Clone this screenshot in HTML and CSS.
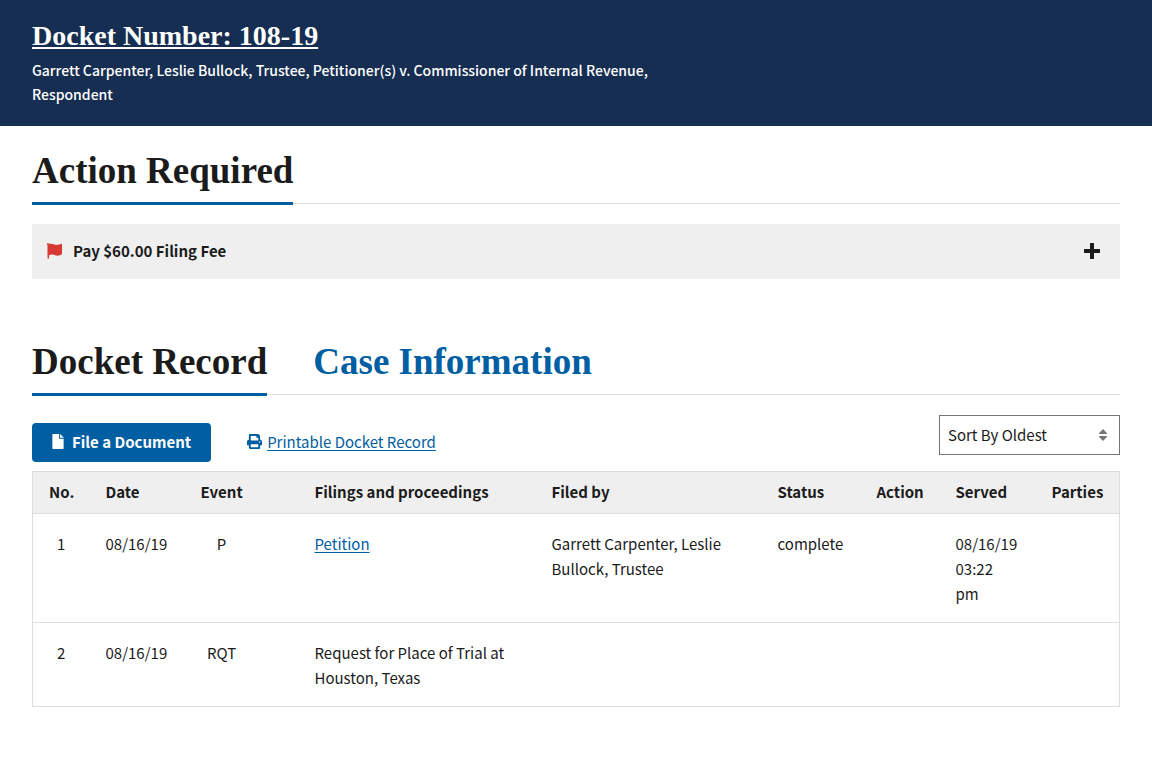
FILE: index.html
```html
<!DOCTYPE html>
<html lang="en">
<head>
<meta charset="utf-8">
<meta name="viewport" content="width=device-width, initial-scale=1">
<title>Docket Number: 108-19</title>
<link rel="stylesheet" href="styles.css">
</head>
<body>
<header class="case-header">
  <h1 class="case-title"><a href="#case">Docket Number: 108-19</a></h1>
  <p class="case-caption">Garrett Carpenter, Leslie Bullock, Trustee, Petitioner(s) v. Commissioner of Internal Revenue, Respondent</p>
</header>
<main class="content">
  <section>
    <div class="tabs">
      <h2 class="tab tab-active">Action Required</h2>
    </div>
    <button type="button" class="accordion" aria-expanded="false">
      <svg class="icon-flag" viewBox="0 0 16 16" aria-hidden="true"><path d="M0 1.2C0 .4.6 0 1 0s1 .4 1 1.1C5.500-.1 7.500 2.600 11 1.800 12.800 1.500 14 .8 15 .8V11.300C12 13.200 9.500 12.700 7.500 12 5.500 11.400 3.500 11.500 2 12.200V15.500H.5V2C.2 1.800 0 1.500 0 1.200Z"/></svg>
      <span class="accordion-label">Pay $60.00 Filing Fee</span>
      <svg class="icon-plus" viewBox="0 0 16 16" aria-hidden="true"><path d="M6.500 0h3q.5 0 .5.500V6h5.500q.5 0 .5.500v3q0 .5-.5.500H10v5.500q0 .5-.5.500h-3q-.5 0-.5-.5V10H.5Q0 10 0 9.500v-3Q0 6 .5 6H6V.5Q6 0 6.500 0Z"/></svg>
    </button>
  </section>
  <section class="record">
    <div class="tabs" role="tablist">
      <button type="button" class="tab tab-active" role="tab" aria-selected="true">Docket Record</button>
      <button type="button" class="tab" role="tab" aria-selected="false">Case Information</button>
    </div>
    <div class="toolbar">
      <div class="actions">
        <button type="button" class="primary">
          <svg class="icon-file" viewBox="0 0 12 16" aria-hidden="true"><path d="M0 .7Q0 0 .7 0H7v4.300q0 .7.700.7H12v10.300q0 .7-.7.700H.7Q0 16 0 15.300ZM8 0h.3L12 3.700V4H8Z"/></svg>
          File a Document
        </button>
        <a class="print" href="#print">
          <svg class="icon-print" viewBox="0 0 512 512" aria-hidden="true"><path d="M448 192V77.250c0-8.490-3.370-16.620-9.370-22.630L393.370 9.370c-6-6-14.140-9.370-22.630-9.370H96C78.330 0 64 14.330 64 32v160c-35.350 0-64 28.650-64 64v112c0 8.840 7.160 16 16 16h48v96c0 17.670 14.330 32 32 32h320c17.670 0 32-14.330 32-32v-96h48c8.840 0 16-7.160 16-16V256c0-35.350-28.650-64-64-64zm-64 256H128v-96h256v96zm0-224H128V64h192v48c0 8.840 7.160 16 16 16h48v96zm48 72c-13.250 0-24-10.750-24-24s10.750-24 24-24 24 10.750 24 24-10.750 24-24 24z"/></svg>
          <span class="print-label">Printable Docket Record</span>
        </a>
      </div>
      <div class="sort">
        <select class="sort-select" aria-label="Sort docket record">
          <option>Sort By Oldest</option>
          <option>Sort By Newest</option>
        </select>
        <svg class="icon-sort" viewBox="0 0 10 12" aria-hidden="true"><path d="M5 0l4 4.200q.5.800-.5.800h-7Q.5 5 1 4.200ZM5 12L1 7.800Q.5 7 1.500 7h7q1 0 .5.800Z"/></svg>
      </div>
    </div>
    <table class="docket">
      <colgroup>
        <col class="col-no"><col class="col-date"><col class="col-event"><col class="col-icon"><col class="col-filings"><col><col class="col-status"><col class="col-action"><col class="col-served"><col class="col-parties">
      </colgroup>
      <thead>
        <tr>
          <th scope="col" class="center">No.</th>
          <th scope="col">Date</th>
          <th scope="col" class="center">Event</th>
          <th aria-hidden="true"></th>
          <th scope="col">Filings and proceedings</th>
          <th scope="col">Filed by</th>
          <th scope="col">Status</th>
          <th scope="col">Action</th>
          <th scope="col">Served</th>
          <th scope="col">Parties</th>
        </tr>
      </thead>
      <tbody>
        <tr>
          <td class="center">1</td>
          <td>08/16/19</td>
          <td class="center">P</td>
          <td></td>
          <td><a href="#petition">Petition</a></td>
          <td>Garrett Carpenter, Leslie Bullock, Trustee</td>
          <td>complete</td>
          <td></td>
          <td>08/16/19 03:22 pm</td>
          <td></td>
        </tr>
        <tr>
          <td class="center">2</td>
          <td>08/16/19</td>
          <td class="center">RQT</td>
          <td></td>
          <td>Request for Place of Trial at Houston, Texas</td>
          <td></td>
          <td></td>
          <td></td>
          <td></td>
          <td></td>
        </tr>
      </tbody>
    </table>
  </section>
</main>
</body>
</html>
```
FILE: styles.css
```css
* {
  box-sizing: border-box;
}

body {
  margin: 0;
  background: #fff;
  color: #1b1b1b;
  font: 15px/25px "Noto Sans CJK SC", "Noto Sans", sans-serif;
}

button,
select {
  font: inherit;
  color: inherit;
  cursor: pointer;
}

a {
  color: #005ea2;
  text-underline-offset: 2px;
}

svg {
  display: block;
  flex: none;
  fill: currentColor;
}

.case-header {
  padding: 20px 32px;
  background: #162e51;
  color: #fff;
}

.case-title {
  margin: 0 0 6px;
  font: bold 28px/32px "Liberation Serif", serif;
}

.case-title a {
  color: inherit;
  text-decoration-thickness: 2px;
}

.case-caption {
  max-width: 640px;
  margin: 0;
  font-size: 14px;
  font-weight: 500;
  line-height: 24px;
}

.content {
  padding: 24px 32px 64px;
}

.tabs {
  display: flex;
  gap: 46px;
  border-bottom: 1px solid #dcdee0;
}

.tab {
  margin: 0 0 -2px;
  padding: 0 0 10px;
  border: 0;
  border-bottom: 3px solid transparent;
  background: none;
  color: #005ea2;
  font: bold 37px/42px "Liberation Serif", serif;
}

.tab-active {
  border-bottom-color: #005ea2;
  color: #1b1b1b;
}

.accordion {
  display: flex;
  align-items: center;
  width: 100%;
  margin-top: 20px;
  padding: 14px 20px 16px 15px;
  border: 0;
  background: #efefef;
  font-weight: bold;
  text-align: left;
}

.icon-flag {
  width: 16px;
  height: 16px;
  margin-right: 10px;
  color: #d83933;
}

.accordion-label {
  flex: 1;
}

.icon-plus {
  width: 16px;
  height: 16px;
}

.record {
  margin-top: 62px;
}

.toolbar {
  display: flex;
  justify-content: space-between;
  align-items: flex-start;
  margin: 20px 0 9px;
}

.actions {
  display: flex;
  align-items: center;
  gap: 36px;
  margin-top: 8px;
}

.primary {
  display: flex;
  align-items: center;
  gap: 8px;
  padding: 6px 20px 8px;
  border: 0;
  border-radius: 4px;
  background: #005ea2;
  color: #fff;
  font-weight: bold;
}

.print {
  display: flex;
  align-items: center;
  gap: 5px;
  padding-bottom: 2px;
  text-decoration: none;
}

.print-label {
  text-decoration: underline;
}

.icon-file {
  width: 12px;
  height: 15px;
}

.icon-print {
  width: 15px;
  height: 15px;
}

.sort {
  position: relative;
  width: 181px;
}

.sort-select {
  display: block;
  width: 100%;
  height: 40px;
  padding: 0 28px 2px 8px;
  border: 1px solid #71767a;
  border-radius: 0;
  appearance: none;
  background: #fff;
}

.icon-sort {
  position: absolute;
  top: 14px;
  right: 12px;
  width: 10px;
  height: 12px;
  color: #757575;
  pointer-events: none;
}

.docket {
  width: 100%;
  border: 1px solid #dcdee0;
  border-collapse: collapse;
  table-layout: fixed;
}

.docket th,
.docket td {
  padding: 17px 16px 16px;
  border-bottom: 1px solid #dcdee0;
  text-align: left;
  vertical-align: top;
}

.docket th {
  padding-top: 7px;
  padding-bottom: 9px;
  background: #efefef;
  font-weight: bold;
  white-space: nowrap;
}

.docket .center {
  text-align: center;
}

.col-no { width: 57px; }
.col-date { width: 95px; }
.col-event { width: 74px; }
.col-icon { width: 40px; }
.col-filings { width: 237px; }
.col-status { width: 99px; }
.col-action { width: 79px; }
.col-served { width: 96px; }
.col-parties { width: 84px; }
```
